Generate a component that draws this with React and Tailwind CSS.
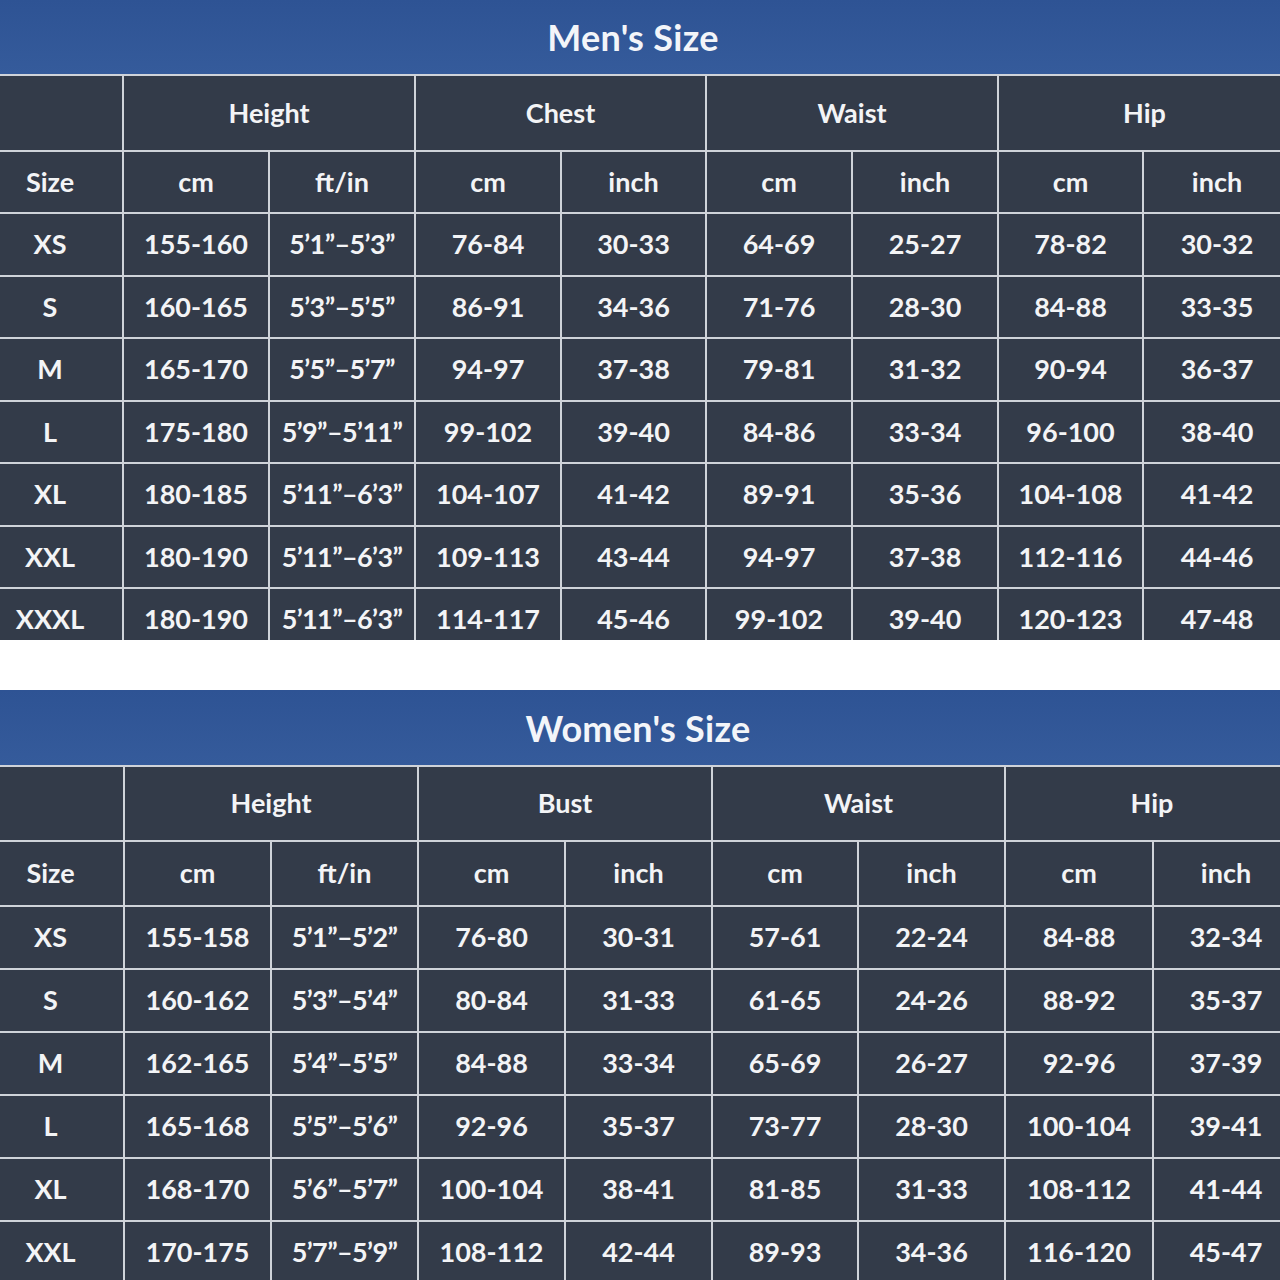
const menRows = [
  ['XS', '155-160', '5’1”–5’3”', '76-84', '30-33', '64-69', '25-27', '78-82', '30-32'],
  ['S', '160-165', '5’3”–5’5”', '86-91', '34-36', '71-76', '28-30', '84-88', '33-35'],
  ['M', '165-170', '5’5”–5’7”', '94-97', '37-38', '79-81', '31-32', '90-94', '36-37'],
  ['L', '175-180', '5’9”–5’11”', '99-102', '39-40', '84-86', '33-34', '96-100', '38-40'],
  ['XL', '180-185', '5’11”–6’3”', '104-107', '41-42', '89-91', '35-36', '104-108', '41-42'],
  ['XXL', '180-190', '5’11”–6’3”', '109-113', '43-44', '94-97', '37-38', '112-116', '44-46'],
  ['XXXL', '180-190', '5’11”–6’3”', '114-117', '45-46', '99-102', '39-40', '120-123', '47-48'],
];

const womenRows = [
  ['XS', '155-158', '5’1”–5’2”', '76-80', '30-31', '57-61', '22-24', '84-88', '32-34'],
  ['S', '160-162', '5’3”–5’4”', '80-84', '31-33', '61-65', '24-26', '88-92', '35-37'],
  ['M', '162-165', '5’4”–5’5”', '84-88', '33-34', '65-69', '26-27', '92-96', '37-39'],
  ['L', '165-168', '5’5”–5’6”', '92-96', '35-37', '73-77', '28-30', '100-104', '39-41'],
  ['XL', '168-170', '5’6”–5’7”', '100-104', '38-41', '81-85', '31-33', '108-112', '41-44'],
  ['XXL', '170-175', '5’7”–5’9”', '108-112', '42-44', '89-93', '34-36', '116-120', '45-47'],
];

const Cell = ({ children, className = '' }) => (
  <div className={`bg-[#333b49] flex items-center justify-center whitespace-nowrap ${className}`}>
    {children}
  </div>
);

const SizeTable = ({ title, titleH, titlePad, groups, rows, cols, rowH, headH1, headH2, height }) => (
  <div className={`${height} overflow-hidden`}>
    {/* Title bar */}
    <div className={`${titleH} bg-gradient-to-b from-[#2e5394] to-[#355b9b] flex items-center justify-center ${titlePad}`}>
      <span className="text-[36px] font-bold text-[#f3f5f9] tracking-[0.3px]">{title}</span>
    </div>

    {/* Grid */}
    <div className={`grid ${cols} gap-[2px] pt-[2px] bg-[#cfd3d9] text-[27px] font-bold text-[#f3f4f6]`}>
      <Cell className={headH1}></Cell>
      {groups.map((g) => (
        <Cell key={g} className={`col-span-2 ${headH1}`}>{g}</Cell>
      ))}

      <Cell className={`${headH2} pr-[22px]`}>Size</Cell>
      <Cell className={headH2}>cm</Cell>
      <Cell className={headH2}>ft/in</Cell>
      {[0, 1, 2].map((i) => (
        <div key={i} className="contents">
          <Cell className={headH2}>cm</Cell>
          <Cell className={headH2}>inch</Cell>
        </div>
      ))}

      {rows.map((r) => (
        <div key={r[0]} className="contents">
          {r.map((v, ci) => (
            <Cell
              key={ci}
              className={`${rowH} ${ci === 0 ? 'pr-[22px]' : ''} ${ci === 2 ? 'tracking-[-0.6px]' : ''}`}
            >
              {v}
            </Cell>
          ))}
        </div>
      ))}
    </div>
  </div>
);

export default function App() {
  return (
    <div className="w-[1280px] h-[1280px] overflow-hidden bg-white font-['Lato','DejaVu_Sans',sans-serif]">
      <SizeTable
        title="Men's Size"
        titleH="h-[74px]"
        titlePad="pr-[14px]"
        groups={['Height', 'Chest', 'Waist', 'Hip']}
        rows={menRows}
        cols="w-[1290px] grid-cols-[122px_144px_144px_144px_143px_144px_144px_143px_1fr]"
        headH1="h-[74px]"
        headH2="h-[60px]"
        rowH="h-[60.5px]"
        height="h-[640px]"
      />

      <div className="h-[50px]"></div>

      <SizeTable
        title="Women's Size"
        titleH="h-[75px]"
        titlePad="pr-[4px]"
        groups={['Height', 'Bust', 'Waist', 'Hip']}
        rows={womenRows}
        cols="w-[1298px] grid-cols-[123px_145px_145px_145px_145px_144px_145px_146px_1fr]"
        headH1="h-[73px]"
        headH2="h-[63px]"
        rowH="h-[61px]"
        height="h-[590px]"
      />
    </div>
  );
}
